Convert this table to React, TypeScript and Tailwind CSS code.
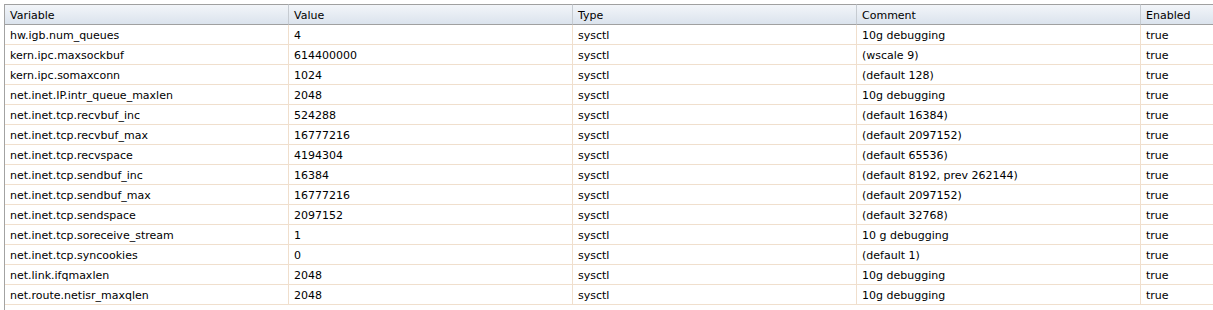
import React from "react";

const rows: [string, string, string, string, string][] = [
  ["hw.igb.num_queues", "4", "sysctl", "10g debugging", "true"],
  ["kern.ipc.maxsockbuf", "614400000", "sysctl", "(wscale 9)", "true"],
  ["kern.ipc.somaxconn", "1024", "sysctl", "(default 128)", "true"],
  ["net.inet.IP.intr_queue_maxlen", "2048", "sysctl", "10g debugging", "true"],
  ["net.inet.tcp.recvbuf_inc", "524288", "sysctl", "(default 16384)", "true"],
  ["net.inet.tcp.recvbuf_max", "16777216", "sysctl", "(default 2097152)", "true"],
  ["net.inet.tcp.recvspace", "4194304", "sysctl", "(default 65536)", "true"],
  ["net.inet.tcp.sendbuf_inc", "16384", "sysctl", "(default 8192, prev 262144)", "true"],
  ["net.inet.tcp.sendbuf_max", "16777216", "sysctl", "(default 2097152)", "true"],
  ["net.inet.tcp.sendspace", "2097152", "sysctl", "(default 32768)", "true"],
  ["net.inet.tcp.soreceive_stream", "1", "sysctl", "10 g debugging", "true"],
  ["net.inet.tcp.syncookies", "0", "sysctl", "(default 1)", "true"],
  ["net.link.ifqmaxlen", "2048", "sysctl", "10g debugging", "true"],
  ["net.route.netisr_maxqlen", "2048", "sysctl", "10g debugging", "true"],
];

const headers = ["Variable", "Value", "Type", "Comment", "Enabled"];

export default function App() {
  return (
    <div
      className="w-[1213px] h-[310px] bg-white overflow-hidden pt-[4px] pl-[4px]"
      style={{ fontFamily: '"DejaVu Sans", Verdana, sans-serif' }}
    >
      <div className="h-[306px] border-l border-[#a3a3a3]">
        <div className="grid grid-cols-[284px_284px_284px_284px_1fr] text-[11px] leading-[13px] text-black">
          {headers.map((h, i) => (
            <div
              key={h}
              className={`h-[21px] border-t border-b border-[#a0a0a0] bg-gradient-to-b from-[#f2f5f9] to-[#dbe3ed] pt-[4px] pl-[5px] ${
                i < 4 ? "border-r border-r-[#c6cbd1]" : ""
              }`}
            >
              {h}
            </div>
          ))}
          {rows.map((r, ri) =>
            r.map((c, ci) => (
              <div
                key={`${ri}-${ci}`}
                className={`h-[20px] border-b border-[#f0dfcd] pt-[4px] pl-[5px] whitespace-nowrap ${
                  ci < 4 ? "border-r" : ""
                }`}
              >
                {c}
              </div>
            ))
          )}
        </div>
      </div>
    </div>
  );
}
